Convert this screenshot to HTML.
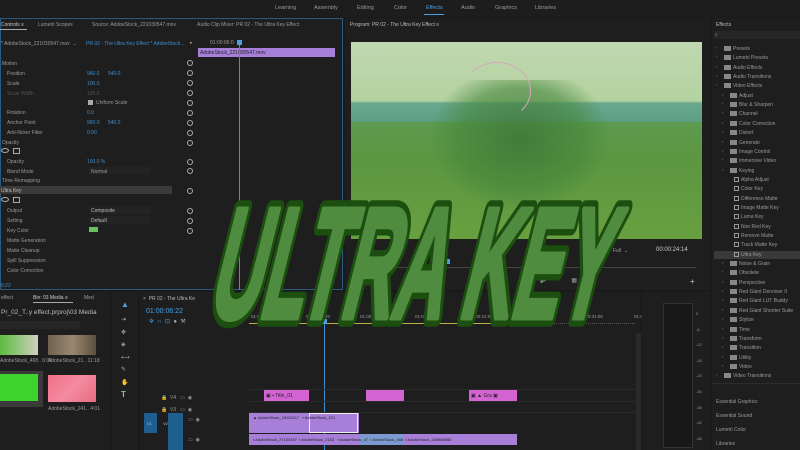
<!DOCTYPE html>
<html><head><meta charset="utf-8"><style>
*{margin:0;padding:0;box-sizing:border-box}
body{width:800px;height:450px;overflow:hidden;background:#1a1a1a;font-family:"Liberation Sans",sans-serif;color:#9a9a9a;position:relative}
.a{position:absolute;white-space:nowrap}
.t{font-size:5px;color:#9a9a9a}
.b{color:#3d8fd0}
.p{background:#1e1e1e}
.r{position:absolute;width:6px;height:6px;border:1px solid #aaa;border-radius:50%;left:187px}
.fold{position:absolute;width:7px;height:5px;background:#888}
</style></head><body>
<div class="a" style="left:0;top:0;width:800px;height:17px;background:#1d1d1d"></div>
<div class="a t" style="top:5px;left:275px;font-size:5.5px">Learning</div>
<div class="a t" style="top:5px;left:314px;font-size:5.5px">Assembly</div>
<div class="a t" style="top:5px;left:357px;font-size:5.5px">Editing</div>
<div class="a t" style="top:5px;left:394px;font-size:5.5px">Color</div>
<div class="a t" style="top:5px;left:426px;font-size:5.5px;color:#4aa0e0">Effects</div>
<div class="a" style="top:14px;left:424px;width:20px;height:1px;background:#4aa0e0"></div>
<div class="a t" style="top:5px;left:461px;font-size:5.5px">Audio</div>
<div class="a t" style="top:5px;left:495px;font-size:5.5px">Graphics</div>
<div class="a t" style="top:5px;left:535px;font-size:5.5px">Libraries</div>

<div class="a p" style="left:0;top:18px;width:343px;height:272px;border:1px solid #2a5a80"></div>
<div class="a t" style="top:22px;left:1px;color:#ccc">Controls ≡</div>
<div class="a" style="top:29px;left:0;width:27px;height:1px;background:#aaa"></div>
<div class="a t" style="top:22px;left:38px">Lumetri Scopes</div>
<div class="a t" style="top:22px;left:92px">Source: AdobeStock_221030547.mov</div>
<div class="a t" style="top:22px;left:197px">Audio Clip Mixer: PR 02 - The Ultra Key Effect</div>
<div class="a t" style="top:41px;left:1px">* AdobeStock_221030547.mov &nbsp;⌄</div>
<div class="a t b" style="top:41px;left:86px">PR 02 - The Ultra Key Effect * AdobeStock...</div>
<div class="a t" style="top:40px;left:190px">▸</div>
<div class="a t" style="top:40px;left:210px">01:00:06:0</div>
<div class="a" style="left:198px;top:48px;width:137px;height:9px;background:#a77fd8"></div>
<div class="a t" style="top:50px;left:200px;color:#222">AdobeStock_221030547.mov</div>
<div class="a" style="left:239px;top:42px;width:1px;height:248px;background:#3d8fd0"></div>
<div class="a" style="left:237px;top:40px;width:5px;height:5px;background:#4aa0e0"></div>

<div class="a t" style="top:61px;left:2px">Motion</div>
<div class="a t" style="top:71px;left:7px">Position</div><div class="a t b" style="top:71px;left:87px">960.0 &nbsp;&nbsp;&nbsp;&nbsp; 540.0</div>
<div class="a t" style="top:81px;left:7px">Scale</div><div class="a t b" style="top:81px;left:87px">100.0</div>
<div class="a t" style="top:91px;left:7px;color:#555">Scale Width</div><div class="a t" style="top:91px;left:87px;color:#555">100.0</div>
<div class="a" style="top:100px;left:88px;width:5px;height:5px;background:#aaa"></div><div class="a t" style="top:100px;left:96px">Uniform Scale</div>
<div class="a t" style="top:110px;left:7px">Rotation</div><div class="a t b" style="top:110px;left:87px">0.0</div>
<div class="a t" style="top:120px;left:7px">Anchor Point</div><div class="a t b" style="top:120px;left:87px">960.0 &nbsp;&nbsp;&nbsp;&nbsp; 540.0</div>
<div class="a t" style="top:130px;left:7px">Anti-flicker Filter</div><div class="a t b" style="top:130px;left:87px">0.00</div>
<div class="a t" style="top:140px;left:2px">Opacity</div>
<div class="a" style="top:148px;left:1px;width:8px;height:5px;border:1px solid #aaa;border-radius:50%"></div>
<div class="a" style="top:148px;left:13px;width:7px;height:6px;border:1px solid #aaa"></div>
<div class="a t" style="top:159px;left:7px">Opacity</div><div class="a t b" style="top:159px;left:87px">100.0 %</div>
<div class="a t" style="top:169px;left:7px">Blend Mode</div>
<div class="a" style="top:167px;left:89px;width:62px;height:8px;background:#232323"></div><div class="a t" style="top:169px;left:91px">Normal</div>
<div class="a t" style="top:178px;left:2px">Time Remapping</div>
<div class="a" style="top:186px;left:0;width:172px;height:8px;background:#3b3b3b"></div><div class="a t" style="top:188px;left:1px;color:#bbb">Ultra Key</div>
<div class="a" style="top:197px;left:1px;width:8px;height:5px;border:1px solid #aaa;border-radius:50%"></div>
<div class="a" style="top:197px;left:13px;width:7px;height:6px;border:1px solid #aaa"></div>
<div class="a t" style="top:208px;left:7px">Output</div>
<div class="a" style="top:206px;left:89px;width:62px;height:8px;background:#232323"></div><div class="a t" style="top:208px;left:91px;color:#bbb">Composite</div>
<div class="a t" style="top:218px;left:7px">Setting</div>
<div class="a" style="top:216px;left:89px;width:62px;height:8px;background:#232323"></div><div class="a t" style="top:218px;left:91px;color:#bbb">Default</div>
<div class="a t" style="top:228px;left:7px">Key Color</div>
<div class="a" style="top:227px;left:89px;width:9px;height:5px;background:#6ac060"></div>
<div class="a t" style="top:238px;left:7px">Matte Generation</div>
<div class="a t" style="top:248px;left:7px">Matte Cleanup</div>
<div class="a t" style="top:258px;left:7px">Spill Suppression</div>
<div class="a t" style="top:268px;left:7px">Color Correction</div>
<div class="a t b" style="top:283px;left:1px">6:22</div>
<div class="r" style="top:60px"></div><div class="r" style="top:70px"></div><div class="r" style="top:80px"></div><div class="r" style="top:90px"></div><div class="r" style="top:100px"></div><div class="r" style="top:110px"></div><div class="r" style="top:120px"></div><div class="r" style="top:130px"></div><div class="r" style="top:140px"></div><div class="r" style="top:159px"></div><div class="r" style="top:168px"></div><div class="r" style="top:188px"></div><div class="r" style="top:208px"></div><div class="r" style="top:218px"></div><div class="r" style="top:228px"></div>

<div class="a p" style="left:345px;top:18px;width:365px;height:272px"></div>
<div class="a t" style="top:22px;left:350px;color:#bbb">Program: PR 02 - The Ultra Key Effect ≡</div>
<div class="a" style="left:351px;top:42px;width:351px;height:197px;background:linear-gradient(180deg,#c0d8b0 0%,#b4d2a0 30%,#6aa890 31%,#5fa088 40%,#5e9a50 41%,#5c9640 60%,#68a040 100%)"></div>
<div class="a" style="left:430px;top:80px;width:180px;height:130px;background:radial-gradient(ellipse at 50% 45%,rgba(60,120,55,.85) 0%,rgba(70,135,60,.6) 50%,rgba(80,150,60,0) 72%)"></div>
<div class="a" style="left:463px;top:62px;width:68px;height:58px;border:1px solid #d6a8b8;border-radius:50%;border-bottom-color:transparent;border-left-color:transparent"></div>
<div class="a t" style="top:248px;left:613px">Full &nbsp;⌄</div>
<div class="a t" style="top:247px;left:656px;font-size:6px;color:#ccc">00:00:24:14</div>
<div class="a" style="left:445px;top:259px;width:5px;height:5px;background:#4aa0e0"></div>
<div class="a" style="left:351px;top:267px;width:345px;height:1px;background:#444"></div>
<div class="a t" style="top:277px;left:690px;font-size:8px;color:#ccc">+</div>
<div class="a t" style="top:277px;left:540px;font-size:6px">▮▸ &nbsp;&nbsp;&nbsp;&nbsp;&nbsp;&nbsp;&nbsp;&nbsp;&nbsp;&nbsp;&nbsp;&nbsp;&nbsp;&nbsp;▦ &nbsp;◘ &nbsp;▣</div>

<div class="a p" style="left:712px;top:18px;width:88px;height:432px"></div>
<div class="a t" style="top:22px;left:716px;color:#bbb">Effects</div>
<div class="a" style="top:31px;left:714px;width:86px;height:8px;background:#262626"></div>
<div class="a t" style="top:32px;left:715px">⌕</div>
<div class="a" style="top:251px;left:714px;width:86px;height:8px;background:#3a3a3a"></div>
<div id="fx"></div>
<div class="a" style="top:383px;left:712px;width:88px;height:1px;background:#2c2c2c"></div>
<div class="a t" style="top:399px;left:716px">Essential Graphics</div>
<div class="a t" style="top:413px;left:716px">Essential Sound</div>
<div class="a t" style="top:427px;left:716px">Lumetri Color</div>
<div class="a t" style="top:441px;left:716px">Libraries</div>

<div class="a p" style="left:0;top:292px;width:110px;height:158px"></div>
<div class="a t" style="top:295px;left:1px">effect</div>
<div class="a t" style="top:295px;left:33px;color:#ccc">Bin: 03 Media ≡</div>
<div class="a" style="top:302px;left:33px;width:40px;height:1px;background:#aaa"></div>
<div class="a t" style="top:295px;left:84px">Med</div>
<div class="a t" style="top:309px;left:1px;font-size:6.5px;color:#bbb">Pr_02_T..y effect.prproj\03 Media</div>
<div class="a" style="top:321px;left:0;width:80px;height:8px;background:#262626"></div>
<div class="a" style="top:335px;left:0;width:38px;height:20px;background:linear-gradient(90deg,#5cbc40,#d0d0c0)"></div>
<div class="a" style="top:335px;left:48px;width:48px;height:20px;background:linear-gradient(90deg,#6c6050,#9a8870,#5a5040)"></div>
<div class="a t" style="top:358px;left:0">AdobeStock_468.. 6:00</div>
<div class="a t" style="top:358px;left:48px">AdobeStock_21.. 11:18</div>
<div class="a" style="top:371px;left:0;width:43px;height:36px;background:#3a3a3a"></div>
<div class="a" style="top:374px;left:0;width:38px;height:27px;background:#3ed22c"></div>
<div class="a" style="top:375px;left:48px;width:48px;height:27px;background:linear-gradient(135deg,#f07088,#f48aa0,#e86c80)"></div>
<div class="a t" style="top:406px;left:48px">AdobeStock_241.. 4:01</div>

<div class="a p" style="left:112px;top:292px;width:26px;height:158px"></div>
<div class="a t" style="top:300px;left:121px;font-size:8px;color:#4aa0e0">▲</div>
<div class="a t" style="top:314px;left:121px;font-size:6px;line-height:12.5px;color:#aaa">⇥<br>✥<br>◈<br>⟷<br>✎<br>✋<br><b style="font-size:8px">T</b></div>

<div class="a p" style="left:140px;top:292px;width:500px;height:158px"></div>
<div class="a t" style="top:296px;left:143px;color:#bbb">× &nbsp;PR 02 - The Ultra Ke</div>
<div class="a" style="top:308px;left:146px;font-size:7px;color:#4aa0e0">01:00:06:22</div>
<div class="a t" style="top:318px;left:149px;color:#4aa0e0;font-size:6px">✲ &nbsp;∩ &nbsp;⊡ &nbsp;<span style="color:#aaa">● &nbsp;⚒</span></div>
<div class="a t" style="top:314px;left:251px;font-size:4.5px">01:00:01:09</div>
<div class="a t" style="top:314px;left:306px;font-size:4.5px">01:00:06:09</div>
<div class="a t" style="top:314px;left:360px;font-size:4.5px">01:00:11:09</div>
<div class="a t" style="top:314px;left:415px;font-size:4.5px">01:00:16:09</div>
<div class="a t" style="top:314px;left:469px;font-size:4.5px">01:00:21:09</div>
<div class="a t" style="top:314px;left:524px;font-size:4.5px">01:00:26:08</div>
<div class="a t" style="top:314px;left:579px;font-size:4.5px">01:00:31:08</div>
<div class="a t" style="top:314px;left:634px;font-size:4.5px">01:0</div>
<div class="a" style="left:249px;top:323px;width:268px;height:1px;background:#b8b040"></div>
<div class="a" style="left:517px;top:323px;width:118px;height:1px;border-top:1px dotted #555"></div>
<div class="a" style="left:322px;top:319px;width:5px;height:5px;background:#4aa0e0"></div>
<div class="a" style="left:324px;top:324px;width:1px;height:126px;background:#3d8fd0"></div>
<div class="a" style="left:636px;top:333px;width:5px;height:117px;background:#2a2a2a"></div>
<div class="a" style="left:249px;top:389px;width:387px;height:1px;background:#2a2a2a"></div>
<div class="a" style="left:249px;top:401px;width:387px;height:1px;background:#2a2a2a"></div>
<div class="a" style="left:249px;top:412px;width:387px;height:1px;background:#2a2a2a"></div>
<div class="a t" style="top:393px;left:161px;line-height:11.5px">🔒&nbsp; V4 &nbsp;&nbsp;▭ &nbsp;◉<br>🔒&nbsp; V3 &nbsp;&nbsp;▭ &nbsp;◉</div>
<div class="a" style="left:144px;top:413px;width:13px;height:20px;background:#1f5f8f"></div>
<div class="a" style="left:168px;top:413px;width:15px;height:37px;background:#1f5f8f"></div>
<div class="a t" style="top:421px;left:147px;color:#9cf;font-size:4px">V1 &nbsp;&nbsp;&nbsp;&nbsp;&nbsp;&nbsp;&nbsp;&nbsp;&nbsp;V2</div>
<div class="a t" style="top:417px;left:188px">▭ &nbsp;◉</div>
<div class="a t" style="top:437px;left:188px">▭ &nbsp;◉</div>
<div class="a" style="left:264px;top:390px;width:45px;height:11px;background:#d464d4"></div>
<div class="a t" style="top:393px;left:266px;color:#222">▣ ▪ Title_01</div>
<div class="a" style="left:366px;top:390px;width:38px;height:11px;background:#d464d4"></div>
<div class="a" style="left:469px;top:390px;width:48px;height:11px;background:#d464d4"></div>
<div class="a t" style="top:393px;left:471px;color:#222">▣ ▲ Gra ▣</div>
<div class="a" style="left:249px;top:413px;width:110px;height:20px;background:#a77fd8"></div>
<div class="a" style="left:309px;top:413px;width:49px;height:20px;border:1px solid #eee"></div>
<div class="a t" style="top:415px;left:253px;color:#222;font-size:4px">▲ AdobeStock_28153117 &nbsp;&nbsp;▪ AdobeStock_221</div>
<div class="a" style="left:249px;top:434px;width:268px;height:11px;background:#a77fd8"></div>
<div class="a" style="left:359px;top:434px;width:45px;height:11px;background:#7c9ad0"></div>
<div class="a t" style="top:437px;left:253px;color:#222;font-size:4px">▪ AdobeStock_27153497 &nbsp;▪ AdobeStock_2153 &nbsp;&nbsp;▪ AdobeStock_47 &nbsp;▪ AdobeStock_468 &nbsp;▪ AdobeStock_345968585</div>

<div class="a p" style="left:642px;top:292px;width:68px;height:158px"></div>
<div class="a" style="left:663px;top:303px;width:30px;height:145px;border:1px solid #333;background:#181818"></div>
<div class="a t" style="top:306px;left:696px;font-size:4px;line-height:15.6px">0<br>-6<br>-12<br>-18<br>-24<br>-30<br>-36<br>-42<br>-48</div>

<svg class="a" style="left:0;top:0" width="800" height="450">
<g transform="translate(0,318) skewX(-14) scale(1,2.2)">
<text x="206" y="0" font-family="Liberation Sans, sans-serif" font-weight="bold" font-size="72" textLength="396" lengthAdjust="spacingAndGlyphs" fill="#1c4e10" stroke="#1c4e10" stroke-width="14" vector-effect="non-scaling-stroke" stroke-linejoin="round">ULTRA KEY</text>
<text x="206" y="0" font-family="Liberation Sans, sans-serif" font-weight="bold" font-size="72" textLength="396" lengthAdjust="spacingAndGlyphs" fill="#4f8c40" stroke="#4f8c40" stroke-width="4" vector-effect="non-scaling-stroke" stroke-linejoin="round">ULTRA KEY</text>
</g>
</svg>

<script>
var items=[["Presets",0],["Lumetri Presets",0],["Audio Effects",0],["Audio Transitions",0],["Video Effects",0],["Adjust",1],["Blur & Sharpen",1],["Channel",1],["Color Correction",1],["Distort",1],["Generate",1],["Image Control",1],["Immersive Video",1],["Keying",1],["Alpha Adjust",2],["Color Key",2],["Difference Matte",2],["Image Matte Key",2],["Luma Key",2],["Non Red Key",2],["Remove Matte",2],["Track Matte Key",2],["Ultra Key",2],["Noise & Grain",1],["Obsolete",1],["Perspective",1],["Red Giant Denoiser II",1],["Red Giant LUT Buddy",1],["Red Giant Shooter Suite",1],["Stylize",1],["Time",1],["Transform",1],["Transition",1],["Utility",1],["Video",1],["Video Transitions",0]];
var h="";items.forEach(function(it,i){var y=46+i*9.35,l=it[1];var x=718+l*6;
if(l<2)h+='<div class="a t" style="top:'+(y-1)+'px;left:'+(x-2)+'px;font-size:4px">›</div><div class="fold" style="top:'+y+'px;left:'+(x+6)+'px"></div><div class="a t" style="top:'+y+'px;left:'+(x+15)+'px">'+it[0]+'</div>';
else h+='<div class="a" style="top:'+y+'px;left:'+(x+4)+'px;width:5px;height:5px;border:1px solid #999"></div><div class="a t" style="top:'+y+'px;left:'+(x+11)+'px">'+it[0]+'</div>';});
document.getElementById("fx").innerHTML=h;
</script>
</body></html>
